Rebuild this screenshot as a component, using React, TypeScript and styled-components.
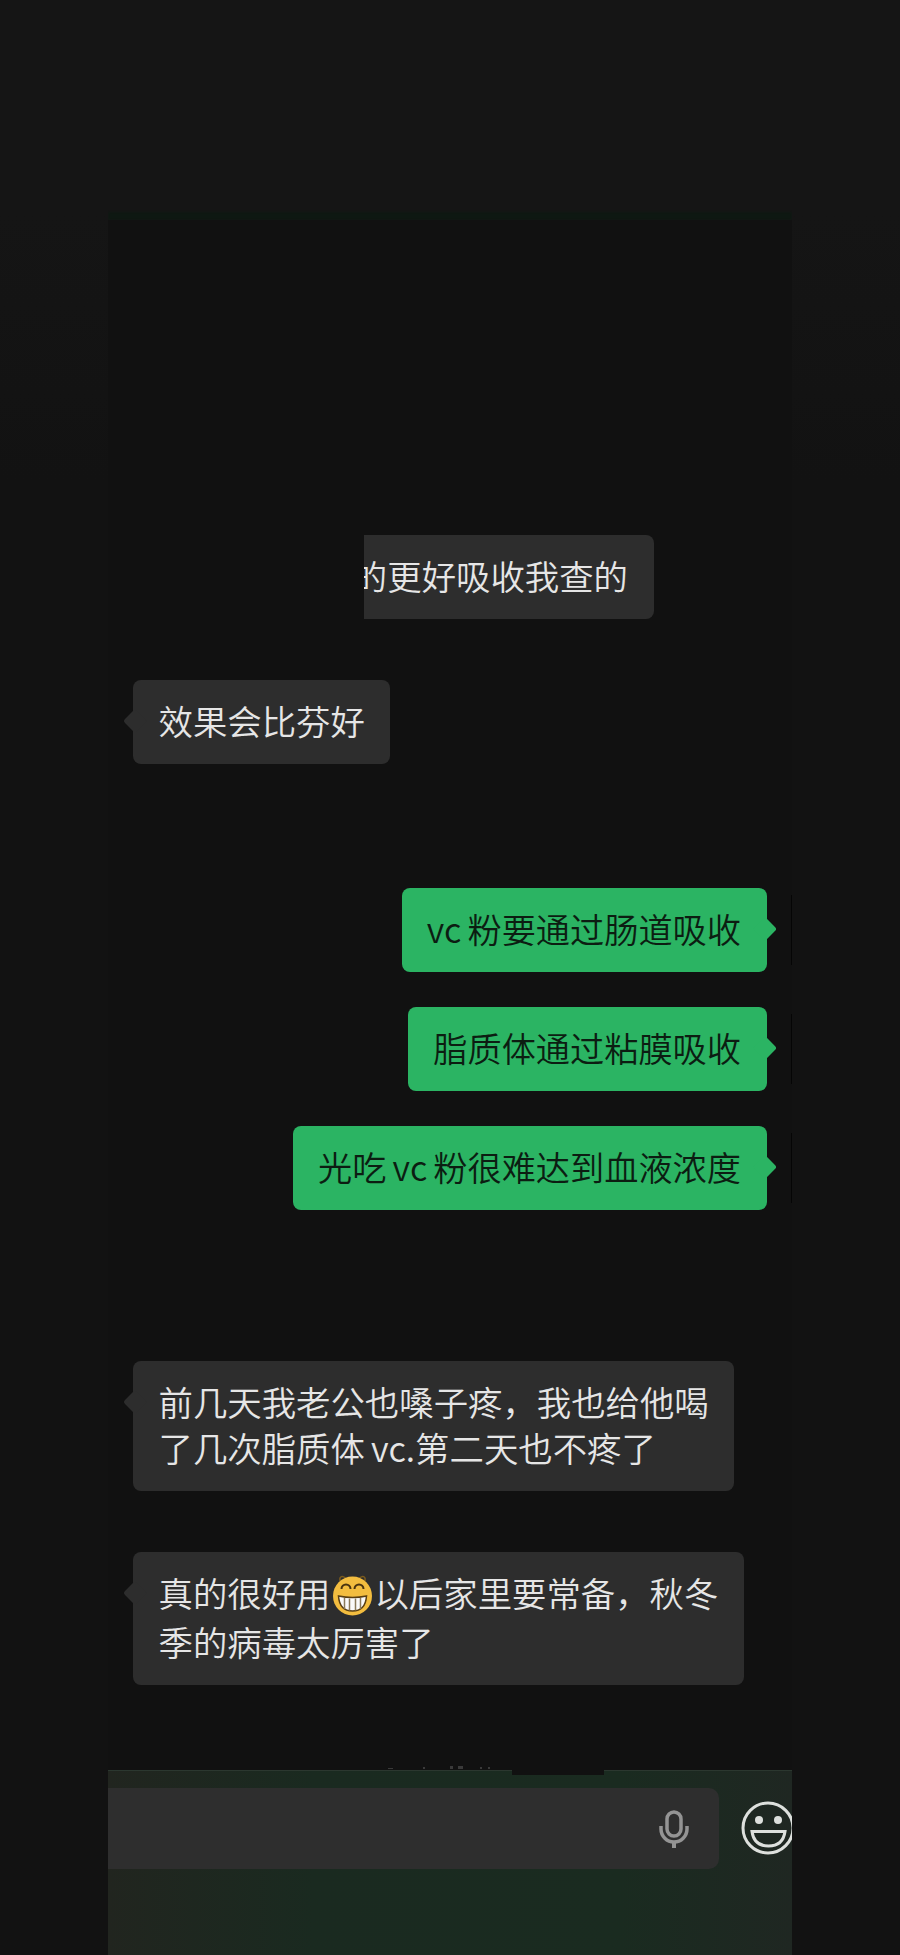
import React, { FC } from 'react';
import styled, { createGlobalStyle } from 'styled-components';

const GlobalStyle = createGlobalStyle`
  html, body {
    margin: 0;
    padding: 0;
    background: #121212;
  }
`;

const Page = styled.div`
  width: 900px;
  height: 1955px;
  overflow: hidden;
  background: linear-gradient(180deg, #151515 0, #151515 215px, #121212 480px);
  font-family: "Noto Sans CJK SC", "Liberation Sans", sans-serif;
`;

const Phone = styled.div`
  display: flex;
  flex-direction: column;
  width: 684px;
  height: 1955px;
  margin-left: 108px;
  overflow: hidden;
`;

const TopBar = styled.div`
  flex: 0 0 220px;
  box-sizing: border-box;
  border-bottom: 8px solid #0e1812;
  filter: blur(1px);
`;

const Messages = styled.div`
  flex: 1;
  display: flex;
  flex-direction: column;
  padding-top: 315px;
  background: #111111;
  position: relative;
`;

const Row = styled.div<{ $mine?: boolean; $gap: number }>`
  position: relative;
  display: flex;
  justify-content: ${(p) => (p.$mine ? 'flex-end' : 'flex-start')};
  margin-top: ${(p) => p.$gap}px;
  padding: 0 25px;
`;

const Bubble = styled.div<{ $mine?: boolean }>`
  position: relative;
  box-sizing: border-box;
  padding: ${(p) => (p.$mine ? '17px 26px 21px 25px' : '17px 25.5px 21px')};
  border-radius: 8px;
  font-size: ${(p) => (p.$mine ? '34.2px' : '34.4px')};
  font-weight: 350;
  line-height: 46px;
  word-spacing: -1.5px;
  white-space: nowrap;
  background: ${(p) => (p.$mine ? '#2bb463' : '#2d2d2d')};
  color: ${(p) => (p.$mine ? '#0c1d12' : '#e6e6e6')};

  &::before {
    content: '';
    position: absolute;
    top: 31px;
    ${(p) => (p.$mine ? 'right: -8px;' : 'left: -8px;')}
    width: 20px;
    height: 20px;
    border-radius: 3px;
    background: inherit;
    transform: rotate(45deg) scale(0.85);
  }
`;

// first message runs under the cropped-out part of the screenshot
const CutBubble = styled(Bubble)`
  width: 290px;
  margin-left: 231px;
  padding-right: 26px;
  display: flex;
  justify-content: flex-end;
  overflow: hidden;
  border-radius: 0 8px 8px 0;

  &::before {
    display: none;
  }
`;

const Sliver = styled.span`
  position: absolute;
  right: 0;
  top: 7px;
  bottom: 7px;
  width: 1px;
  background: #050505;
`;

const InlineEmoji = styled.svg`
  display: inline-block;
  width: 41px;
  height: 46px;
  margin: 0 1px 0 2px;
  vertical-align: -11px;
`;

const BottomBar = styled.div`
  position: relative;
  flex: 0 0 185px;
  box-sizing: border-box;
  display: flex;
  align-items: flex-start;
  gap: 22px;
  padding-top: 17px;
  border-top: 1px solid #2b372f;
  background: linear-gradient(90deg, #21251f 0, #1a2a20 30%, #1a2b20 75%, #1f2722 100%);
`;

const CoverPatch = styled.div`
  position: absolute;
  left: 404px;
  top: -1px;
  width: 92px;
  height: 5px;
  background: #111111;
`;

// remains of a clipped line of text just above the bar
const Specks = styled.svg`
  position: absolute;
  left: 280px;
  top: -8px;
  width: 130px;
  height: 7px;
  color: #3a3a3a;
`;

const InputBox = styled.div`
  flex: 0 0 611px;
  height: 81px;
  box-sizing: border-box;
  display: flex;
  align-items: center;
  justify-content: flex-end;
  padding-right: 30px;
  border-radius: 0 10px 10px 0;
  background: #2e2e2e;
`;

const MicIcon = styled.svg`
  width: 30px;
  height: 38px;
  color: #949494;
`;

const SmileIcon = styled.svg`
  flex: 0 0 54px;
  width: 54px;
  height: 54px;
  margin-top: 13px;
  color: #dde0dd;
`;

const GrinEmoji: FC = () => (
  <InlineEmoji viewBox="0 0 40 46">
    <path d="M8 10 C6 5 9 3 13 6 M32 10 C34 5 31 3 27 6" fill="none" stroke="#7a5a1c" strokeWidth="1.5" />
    <circle cx="20" cy="24" r="19.5" fill="#f3bd3f" />
    <path d="M9 17 a4.5 4.5 0 0 1 9 0 M22 17 a4.5 4.5 0 0 1 9 0" fill="none" stroke="#4a3410" strokeWidth="2" />
    <path d="M6 24 Q20 27 34 24 Q33 39 20 39 Q7 39 6 24Z" fill="#fafafa" stroke="#5a3f12" strokeWidth="1.5" />
    <path d="M12 26 V37 M17 26.500 V38.500 M23 26.500 V38.500 M28 26 V37" stroke="#8a7a5a" strokeWidth="1.500" />
  </InlineEmoji>
);

const Mic: FC = () => (
  <MicIcon viewBox="0 0 30 38" fill="none" stroke="currentColor">
    <rect x="8" y="2" width="14" height="24" rx="7" strokeWidth="3.500" />
    <path d="M2 16 V19 a13 13 0 0 0 26 0 V16" strokeWidth="3.500" />
    <path d="M15 31 V38" strokeWidth="4" />
  </MicIcon>
);

const Smile: FC = () => (
  <SmileIcon viewBox="0 0 54 54" fill="none" stroke="currentColor">
    <circle cx="27" cy="27" r="25" strokeWidth="3" />
    <circle cx="18" cy="19" r="4" fill="currentColor" stroke="none" />
    <circle cx="37" cy="19" r="4" fill="currentColor" stroke="none" />
    <path d="M11 30.500 H44 Q42 45 27.500 45 Q13 45 11 30.500Z" strokeWidth="3" />
  </SmileIcon>
);

const App: FC = () => (
  <Page>
    <GlobalStyle />
    <Phone>
      <TopBar />
      <Messages>
        <Row $gap={0}>
          <CutBubble>
            <span>的更好吸收我查的</span>
          </CutBubble>
        </Row>
        <Row $gap={61}>
          <Bubble>效果会比芬好</Bubble>
        </Row>
        <Row $mine $gap={124}>
          <Bubble $mine>vc 粉要通过肠道吸收</Bubble>
          <Sliver />
        </Row>
        <Row $mine $gap={35}>
          <Bubble $mine>脂质体通过粘膜吸收</Bubble>
          <Sliver />
        </Row>
        <Row $mine $gap={35}>
          <Bubble $mine>光吃 vc 粉很难达到血液浓度</Bubble>
          <Sliver />
        </Row>
        <Row $gap={151}>
          <Bubble>
            前几天我老公也嗓子疼，我也给他喝
            <br />
            了几次脂质体 vc.第二天也不疼了
          </Bubble>
        </Row>
        <Row $gap={61}>
          <Bubble>
            真的很好用
            <GrinEmoji />
            以后家里要常备，秋冬
            <br />
            季的病毒太厉害了
          </Bubble>
        </Row>
      </Messages>
      <BottomBar>
        <Specks viewBox="0 0 130 7" fill="currentColor">
          <rect x="0" y="5" width="5" height="1" />
          <rect x="35" y="4" width="2" height="2" />
          <rect x="62" y="3" width="3" height="3" />
          <rect x="70" y="3" width="5" height="3" />
          <rect x="92" y="4" width="2" height="2" />
          <rect x="100" y="4" width="2" height="2" />
        </Specks>
        <CoverPatch />
        <InputBox>
          <Mic />
        </InputBox>
        <Smile />
      </BottomBar>
    </Phone>
  </Page>
);

export default App;
